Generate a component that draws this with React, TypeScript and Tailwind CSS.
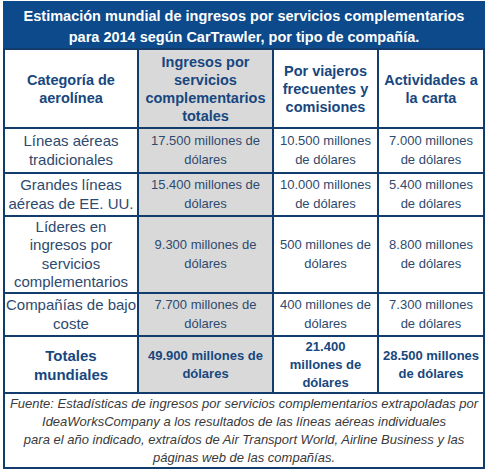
const rows = [
    { cat: ["Líneas aéreas", "tradicionales"], total: ["17.500 millones de", "dólares"], freq: ["10.500 millones", "de dólares"], carta: ["7.000 millones", "de dólares"], h: "h-[43px]" },
    { cat: ["Grandes líneas", "aéreas de EE. UU."], total: ["15.400 millones de", "dólares"], freq: ["10.000 millones", "de dólares"], carta: ["5.400 millones", "de dólares"], h: "h-[41px]" },
    { cat: ["Líderes en", "ingresos por", "servicios", "complementarios"], total: ["9.300 millones de", "dólares"], freq: ["500 millones de", "dólares"], carta: ["8.800 millones", "de dólares"], h: "h-[75px]" },
    { cat: ["Compañías de bajo", "coste"], total: ["7.700 millones de", "dólares"], freq: ["400 millones de", "dólares"], carta: ["7.300 millones", "de dólares"], h: "h-[41px]" },
];

const cell = "flex flex-col items-center justify-center text-center whitespace-nowrap";

function Lines({ lines }: { lines: string[] }) {
    return (
        <>
            {lines.map((l, i) => (
                <span key={i}>{l}</span>
            ))}
        </>
    );
}

export default function App() {
    return (
        <div className="bg-white w-[492px] h-[476px] pt-[1px] font-['Liberation_Sans',Arial,sans-serif]">
            <div className="ml-[3px] w-[482px] bg-[#123c6c]">
                <div className="bg-[#0c4a8b] h-[47px] pt-[5px] text-center text-white font-bold text-[14.5px] leading-[21px]">
                    Estimación mundial de ingresos por servicios complementarios
                    <br />
                    para 2014 según CarTrawler, por tipo de compañía.
                </div>
                <div className="px-[2px] py-[2px] grid grid-cols-[132px_133px_103px_104px] gap-[2px]">
                    {/* cabecera */}
                    <div className={`${cell} h-[77px] bg-white text-[#17477e] font-bold text-[14.5px] leading-[18px]`}>
                        <Lines lines={["Categoría de", "aerolínea"]} />
                    </div>
                    <div className={`${cell} bg-[#d9d9d9] text-[#17477e] font-bold text-[14.5px] leading-[18px]`}>
                        <Lines lines={["Ingresos por", "servicios", "complementarios", "totales"]} />
                    </div>
                    <div className={`${cell} bg-white text-[#17477e] font-bold text-[14.5px] leading-[18px]`}>
                        <Lines lines={["Por viajeros", "frecuentes y", "comisiones"]} />
                    </div>
                    <div className={`${cell} bg-white text-[#17477e] font-bold text-[14.5px] leading-[18px]`}>
                        <Lines lines={["Actividades a", "la carta"]} />
                    </div>

                    {rows.map((r, idx) => (
                        <div key={idx} className="contents">
                            <div className={`${cell} ${r.h} bg-white text-[#2e4a6e] text-[15px] leading-[18.5px]`}><Lines lines={r.cat} /></div>
                            <div className={`${cell} bg-[#d9d9d9] text-[#2e4a6e] text-[13px] leading-[18.5px]`}><Lines lines={r.total} /></div>
                            <div className={`${cell} bg-white text-[#2e4a6e] text-[13px] leading-[18.5px]`}><Lines lines={r.freq} /></div>
                            <div className={`${cell} bg-white text-[#2e4a6e] text-[13px] leading-[18.5px]`}><Lines lines={r.carta} /></div>
                        </div>
                    ))}

                    {/* totales */}
                    <div className={`${cell} h-[55px] bg-white text-[#17477e] font-bold text-[15px] leading-[19px]`}>
                        <Lines lines={["Totales", "mundiales"]} />
                    </div>
                    <div className={`${cell} bg-[#d9d9d9] text-[#17477e] font-bold text-[13px] leading-[18px]`}>
                        <Lines lines={["49.900 millones de", "dólares"]} />
                    </div>
                    <div className={`${cell} bg-white text-[#17477e] font-bold text-[13px] leading-[18px]`}>
                        <Lines lines={["21.400", "millones de", "dólares"]} />
                    </div>
                    <div className={`${cell} bg-white text-[#17477e] font-bold text-[13px] leading-[18px]`}>
                        <Lines lines={["28.500 millones", "de dólares"]} />
                    </div>

                    <div className="col-span-4 h-[73px] bg-white text-center italic text-[#3a3a3a] text-[13px] leading-[18px] pt-[1px]">
                        Fuente: Estadísticas de ingresos por servicios complementarios extrapoladas por
                        <br />
                        IdeaWorksCompany a los resultados de las líneas aéreas individuales
                        <br />
                        para el año indicado, extraídos de Air Transport World, Airline Business y las
                        <br />
                        páginas web de las compañías.
                    </div>
                </div>
            </div>
        </div>
    );
}
